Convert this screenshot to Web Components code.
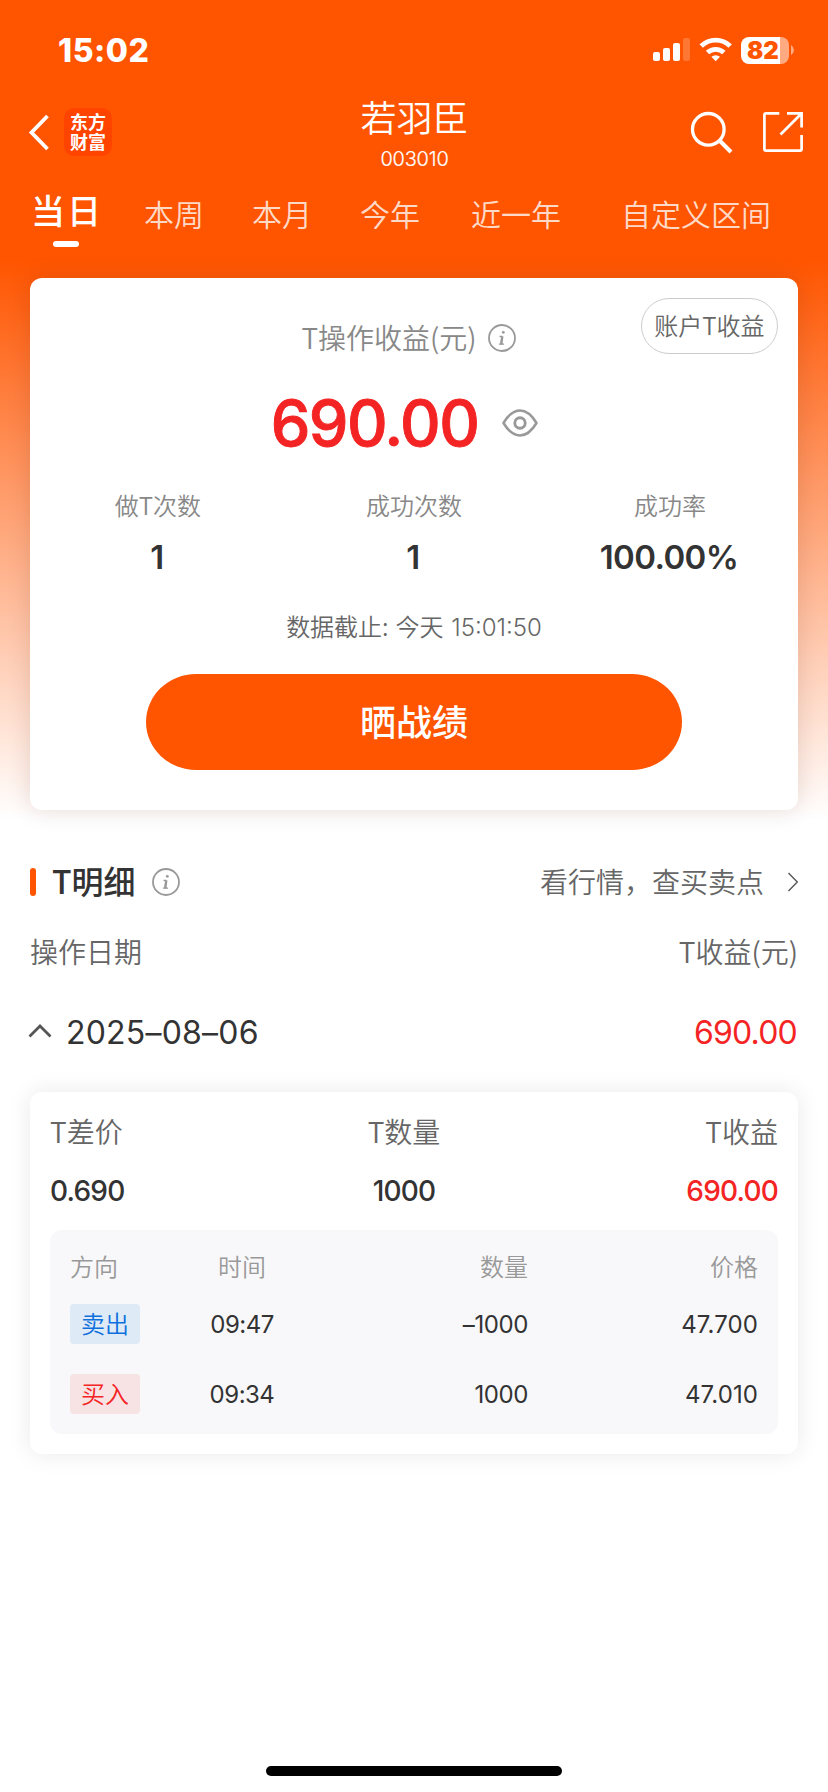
<!DOCTYPE html>
<html lang="zh-CN">
<head>
<meta charset="utf-8">
<title>若羽臣 003010</title>
<style>
html,body{margin:0;padding:0;background:#fff}
body{width:828px;height:1792px;overflow:hidden;font-family:"Noto Sans CJK SC",sans-serif;font-weight:350;color:#333}
</style>
</head>
<body>
<t-app>
  <status-bar time="15:02" level="82"></status-bar>
  <stock-header name="若羽臣" code="003010"></stock-header>
  <period-tabs></period-tabs>
  <profit-card>
    <stat-cell label="做T次数">1</stat-cell>
    <stat-cell label="成功次数">1</stat-cell>
    <stat-cell label="成功率">100.00%</stat-cell>
  </profit-card>
  <detail-head></detail-head>
  <date-row date="2025–08–06" amount="690.00"></date-row>
  <detail-card>
    <trade-row side="sell" label="卖出" time="09:47" qty="–1000" price="47.700"></trade-row>
    <trade-row side="buy" label="买入" time="09:34" qty="1000" price="47.010"></trade-row>
  </detail-card>
  <home-bar></home-bar>
</t-app>
<script>
const define = (tag, render) => customElements.define(tag, class extends HTMLElement {
  constructor() {
    super();
    const t = document.createElement('template');
    t.innerHTML = `<style>:host,*{box-sizing:border-box}svg{display:block;flex:none}.n{font-family:Inter,sans-serif}</style>` + render(k => this.getAttribute(k) || '');
    this.attachShadow({ mode: 'open' }).appendChild(t.content.cloneNode(true));
  }
});

define('t-app', () => `
<style>
:host{display:flex;flex-direction:column;width:828px;height:1792px;
background:linear-gradient(#f50 0,#f50 260px,#fff 820px)}
</style><slot></slot>`);

define('status-bar', a => `
<style>
:host{display:flex;justify-content:space-between;align-items:center;height:100px;padding:0 34px 0 58px;color:#fff}
.time{font:800 32px/40px Inter,sans-serif;letter-spacing:.5px;padding-top:1px}
.r{display:flex;align-items:center}
.bat{display:flex;align-items:center;margin-left:8px}
.cell{width:48px;height:27px;border-radius:8px;background:linear-gradient(90deg,#fff 39px,#ffaa80 39px);
color:#f50;font:900 24px/27px Inter,sans-serif;padding-left:6px;letter-spacing:0;white-space:nowrap}
</style>
<span class="time">${a('time')}</span>
<span class="r">
<svg width="80" height="28" viewBox="0 0 80 28" fill="#fff">
<rect x="0" y="16" width="7" height="9" rx="2"/><rect x="10" y="12" width="7" height="13" rx="2"/>
<rect x="20" y="7" width="7" height="18" rx="2"/><rect x="30" y="2" width="7" height="23" rx="2" opacity=".2"/>
<path d="M62.700 25.200L58.400 20.800A6.400 6.400 0 0 1 67 20.800Z"/>
<g fill="none" stroke="#fff" stroke-width="4.800"><path d="M54.500 16.600A12 12 0 0 1 70.900 16.600"/><path d="M48.200 10A20.700 20.700 0 0 1 77.200 10"/></g>
</svg>
<span class="bat"><span class="cell">${a('level')}</span>
<svg width="5" height="10" viewBox="0 0 5 10"><path d="M2 0Q5 2 5 5T2 10Z" fill="#ffaa80"/></svg></span>
</span>`);

define('stock-header', a => `
<style>
:host{display:grid;grid-template-columns:1fr auto 1fr;height:84px;padding:0 25px 0 28px;color:#fff}
.l{display:flex;align-items:center;height:64px;gap:13px}
.logo{width:48px;height:48px;border-radius:10px;background:#f40;padding:3px 6px 0;font-weight:700;font-size:18px;line-height:20px;word-break:break-all}
.c{text-align:center;margin-left:-2px}
.name{font-size:36px;line-height:36px;margin-top:-2px}
.code{font:300 20px/24px Inter,sans-serif;letter-spacing:-.2px;margin-top:13px;-webkit-text-stroke:.2px}
.r{display:flex;justify-content:flex-end;align-items:center;height:64px;gap:29px}
</style>
<div class="l">
<svg width="23" height="40" viewBox="0 0 23 40"><path d="M19.500 4L3.500 20.500L19.500 37" fill="none" stroke="#fff" stroke-width="3.800"/></svg>
<div class="logo">东方财富</div></div>
<div class="c"><div class="name">${a('name')}</div><div class="code">${a('code')}</div></div>
<div class="r">
<svg width="44" height="44" viewBox="0 0 44 44" fill="none" stroke="#fff" stroke-width="3.300"><circle cx="18.300" cy="19.300" r="15.800"/><path d="M29.500 30.500L41 42" stroke-width="4"/></svg>
<svg width="40" height="40" viewBox="0 0 40 40" fill="none" stroke="#fff" stroke-width="2.700"><path d="M16.300 1.400H3Q1.400 1.400 1.400 3V37Q1.400 38.600 3 38.600H37Q38.600 38.600 38.600 37V23M24 1.400H38.600V15.500M38 2L17.500 22.500"/></svg>
</div>`);

define('period-tabs', () => `
<style>
:host{display:flex;height:94px;padding:0 0 0 30px;color:#ffffffcc;font-size:30px;line-height:58px;white-space:nowrap}
.on{color:#fff;width:72px;font-size:34px;letter-spacing:2px;text-indent:2px;font-weight:500;line-height:51px;display:flex;flex-direction:column;align-items:center}
.on i{display:block;width:26px;height:6px;border-radius:3px;background:#fff;margin-top:6px}
.a{margin-left:42px}.b{margin-left:48px}.c{margin-left:51px}.d{margin-left:60px}
</style>
<div class="on">当日<i></i></div><span class="a">本周</span><span class="b">本月</span><span class="b">今年</span><span class="c">近一年</span><span class="d">自定义区间</span>`);

define('info-icon', () => `
<style>:host{display:block;width:28px;height:28px}</style>
<svg width="28" height="28" viewBox="0 0 28 28"><circle cx="14" cy="14" r="13" fill="none" stroke="#999" stroke-width="1.800"/>
<circle cx="15.300" cy="8.300" r="1.400" fill="#999"/><path d="M11.500 12.500H13.900L12.900 20.200M11 20.200H16" fill="none" stroke="#999" stroke-width="1.300"/><path d="M14.300 12.300L13.300 20.400" fill="none" stroke="#999" stroke-width="2.300"/></svg>`);

define('stat-cell', a => `
<style>
:host{display:block;text-align:center}
.k{font-size:24px;line-height:30px;color:#888}
.v{font:560 33px/40px Inter,sans-serif;color:#333;margin:17px 0 0 -2px;letter-spacing:-.6px}
</style><div class="k">${a('label')}</div><div class="v"><slot></slot></div>`);

define('profit-card', () => `
<style>
:host{display:flex;flex-direction:column;align-items:center;position:relative;margin:0 30px;height:532px;flex:none;background:#fff;border-radius:12px;box-shadow:0 0 24px rgba(80,20,0,.14)}
.pill{position:absolute;right:20px;top:20px;width:137px;height:56px;border:1px solid #ccc;border-radius:28px;font-size:24px;line-height:52px;text-align:center;color:#666}
.t{display:flex;align-items:center;gap:11px;height:40px;margin:40px 0 0 -11px;color:#888;font-size:28px;line-height:36px}
.t span{padding-bottom:2px}
.big{display:flex;align-items:center;gap:24px;height:70px;margin:30px 0 0 -19px;color:#f42424}
.big span{font:500 63px/70px Inter,sans-serif;letter-spacing:-1.600px;-webkit-text-stroke:.9px #f42424}
.stats{display:grid;grid-template-columns:repeat(3,256px);margin-top:32px}
.time{font-size:24px;height:30px;line-height:30px;color:#666;margin-top:34px;white-space:pre;word-spacing:1.500px}
.time .n{letter-spacing:0;margin-left:1px}
button{width:536px;height:96px;margin:33px 0 0;border:0;padding:0 0 4px;border-radius:50px/48px;background:#f50;color:#fff;font:500 36px/48px "Noto Sans CJK SC",sans-serif}
</style>
<div class="pill">账户T收益</div>
<div class="t"><span>T操作收益(元)</span><info-icon></info-icon></div>
<div class="big"><span>690.00</span>
<svg width="36" height="28" viewBox="0 0 36 28" fill="none" stroke="#999" stroke-width="2.600"><path d="M1.500 14Q9 1.500 18 1.500T34.500 14Q27 26.500 18 26.500T1.500 14Z" stroke-linejoin="round"/><circle cx="18" cy="14" r="5.200" stroke-width="2.900"/></svg></div>
<div class="stats"><slot></slot></div>
<div class="time">数据截止: 今天 <span class="n">15:01:50</span></div>
<button>晒战绩</button>`);

define('detail-head', () => `
<style>
:host{display:block;padding:0 30px;margin-top:52px;color:#666;font-size:28px}
.row{display:flex;align-items:center;height:40px}
.bar{width:6px;height:28px;border-radius:3px;background:#f50}
b{font-size:32px;line-height:40px;font-weight:500;color:#333;margin:0 16px;padding-bottom:4px}
.go{margin-left:auto;display:flex;align-items:center;gap:24px}
.go span,.two span{padding-bottom:3px;line-height:40px}
.two{justify-content:space-between;margin-top:30px}
</style>
<div class="row"><i class="bar"></i><b>T明细</b><info-icon></info-icon>
<div class="go"><span>看行情，查买卖点</span><svg width="10" height="20" viewBox="0 0 10 20"><path d="M.5 1L9.300 10L.5 19" fill="none" stroke="#555" stroke-width="1.400"/></svg></div></div>
<div class="row two"><span>操作日期</span><span>T收益(元)</span></div>`);

define('date-row', a => `
<style>
:host{display:flex;align-items:center;height:40px;margin-top:40px;padding:0 31px 0 28px;font:400 32px/40px Inter,sans-serif;letter-spacing:-.8px}
.d{letter-spacing:.2px}
.d,.m{padding-top:1px}
svg{margin:-2px 14px 0 0}.m{margin-left:auto;color:#f42424}
</style>
<svg width="24" height="16" viewBox="0 0 24 16"><path d="M1.500 13.500L12 3L22.500 13.500" fill="none" stroke="#555" stroke-width="2.800"/></svg>
<span class="d">${a('date')}</span><span class="m">${a('amount')}</span>`);

define('detail-card', () => `
<style>
:host{display:block;flex:none;margin:40px 30px 0;height:362px;padding:21px 20px 20px;background:#fff;border-radius:12px;box-shadow:0 0 24px rgba(0,0,0,.09)}
.g{display:grid;grid-template-columns:237px 234px 257px;text-align:center}
.g>:first-child{text-align:left}.g>:last-child{text-align:right}
.h{font-size:28px;line-height:36px;color:#666}
.v{font:500 28px/36px Inter,sans-serif;letter-spacing:-.8px;margin-top:24px}
.v>:last-child{color:#f42424}
.p{margin-top:21px;height:204px;border-radius:12px;background:#f8f8fa;padding:20px}
.ph{display:grid;grid-template-columns:120px 104px 234px 230px;text-align:right;font-size:24px;line-height:32px;color:#999}
.ph>:first-child{text-align:left}.ph>:nth-child(2){text-align:center}
</style>
<div class="g h"><span>T差价</span><span>T数量</span><span>T收益</span></div>
<div class="g v"><span>0.690</span><span>1000</span><span>690.00</span></div>
<div class="p"><div class="ph"><span>方向</span><span>时间</span><span>数量</span><span>价格</span></div><slot></slot></div>`);

define('trade-row', a => `
<style>
:host{display:grid;grid-template-columns:120px 104px 234px 230px;align-items:center;height:40px;margin:22px 0 30px;text-align:right;font:400 24px/32px Inter,sans-serif;letter-spacing:-.4px}
:host(:last-child){margin:0}
.tag{width:70px;height:40px;border-radius:4px;text-align:center;font:350 24px/37px "Noto Sans CJK SC",sans-serif;letter-spacing:0}
.sell{background:#deebf7;color:#0f6fdd}.buy{background:#f8e3e4;color:#f42424}
.t{text-align:center;letter-spacing:-.5px}
span:not(.tag){padding-top:2px}
.p{letter-spacing:.1px}
</style>
<span class="tag ${a('side')}">${a('label')}</span><span class="t">${a('time')}</span><span>${a('qty')}</span><span class="p">${a('price')}</span>`);

define('home-bar', () => `
<style>:host{display:block;width:296px;height:10px;border-radius:5px;background:#000;margin:auto auto 16px}</style>`);
</script>
</body>
</html>
